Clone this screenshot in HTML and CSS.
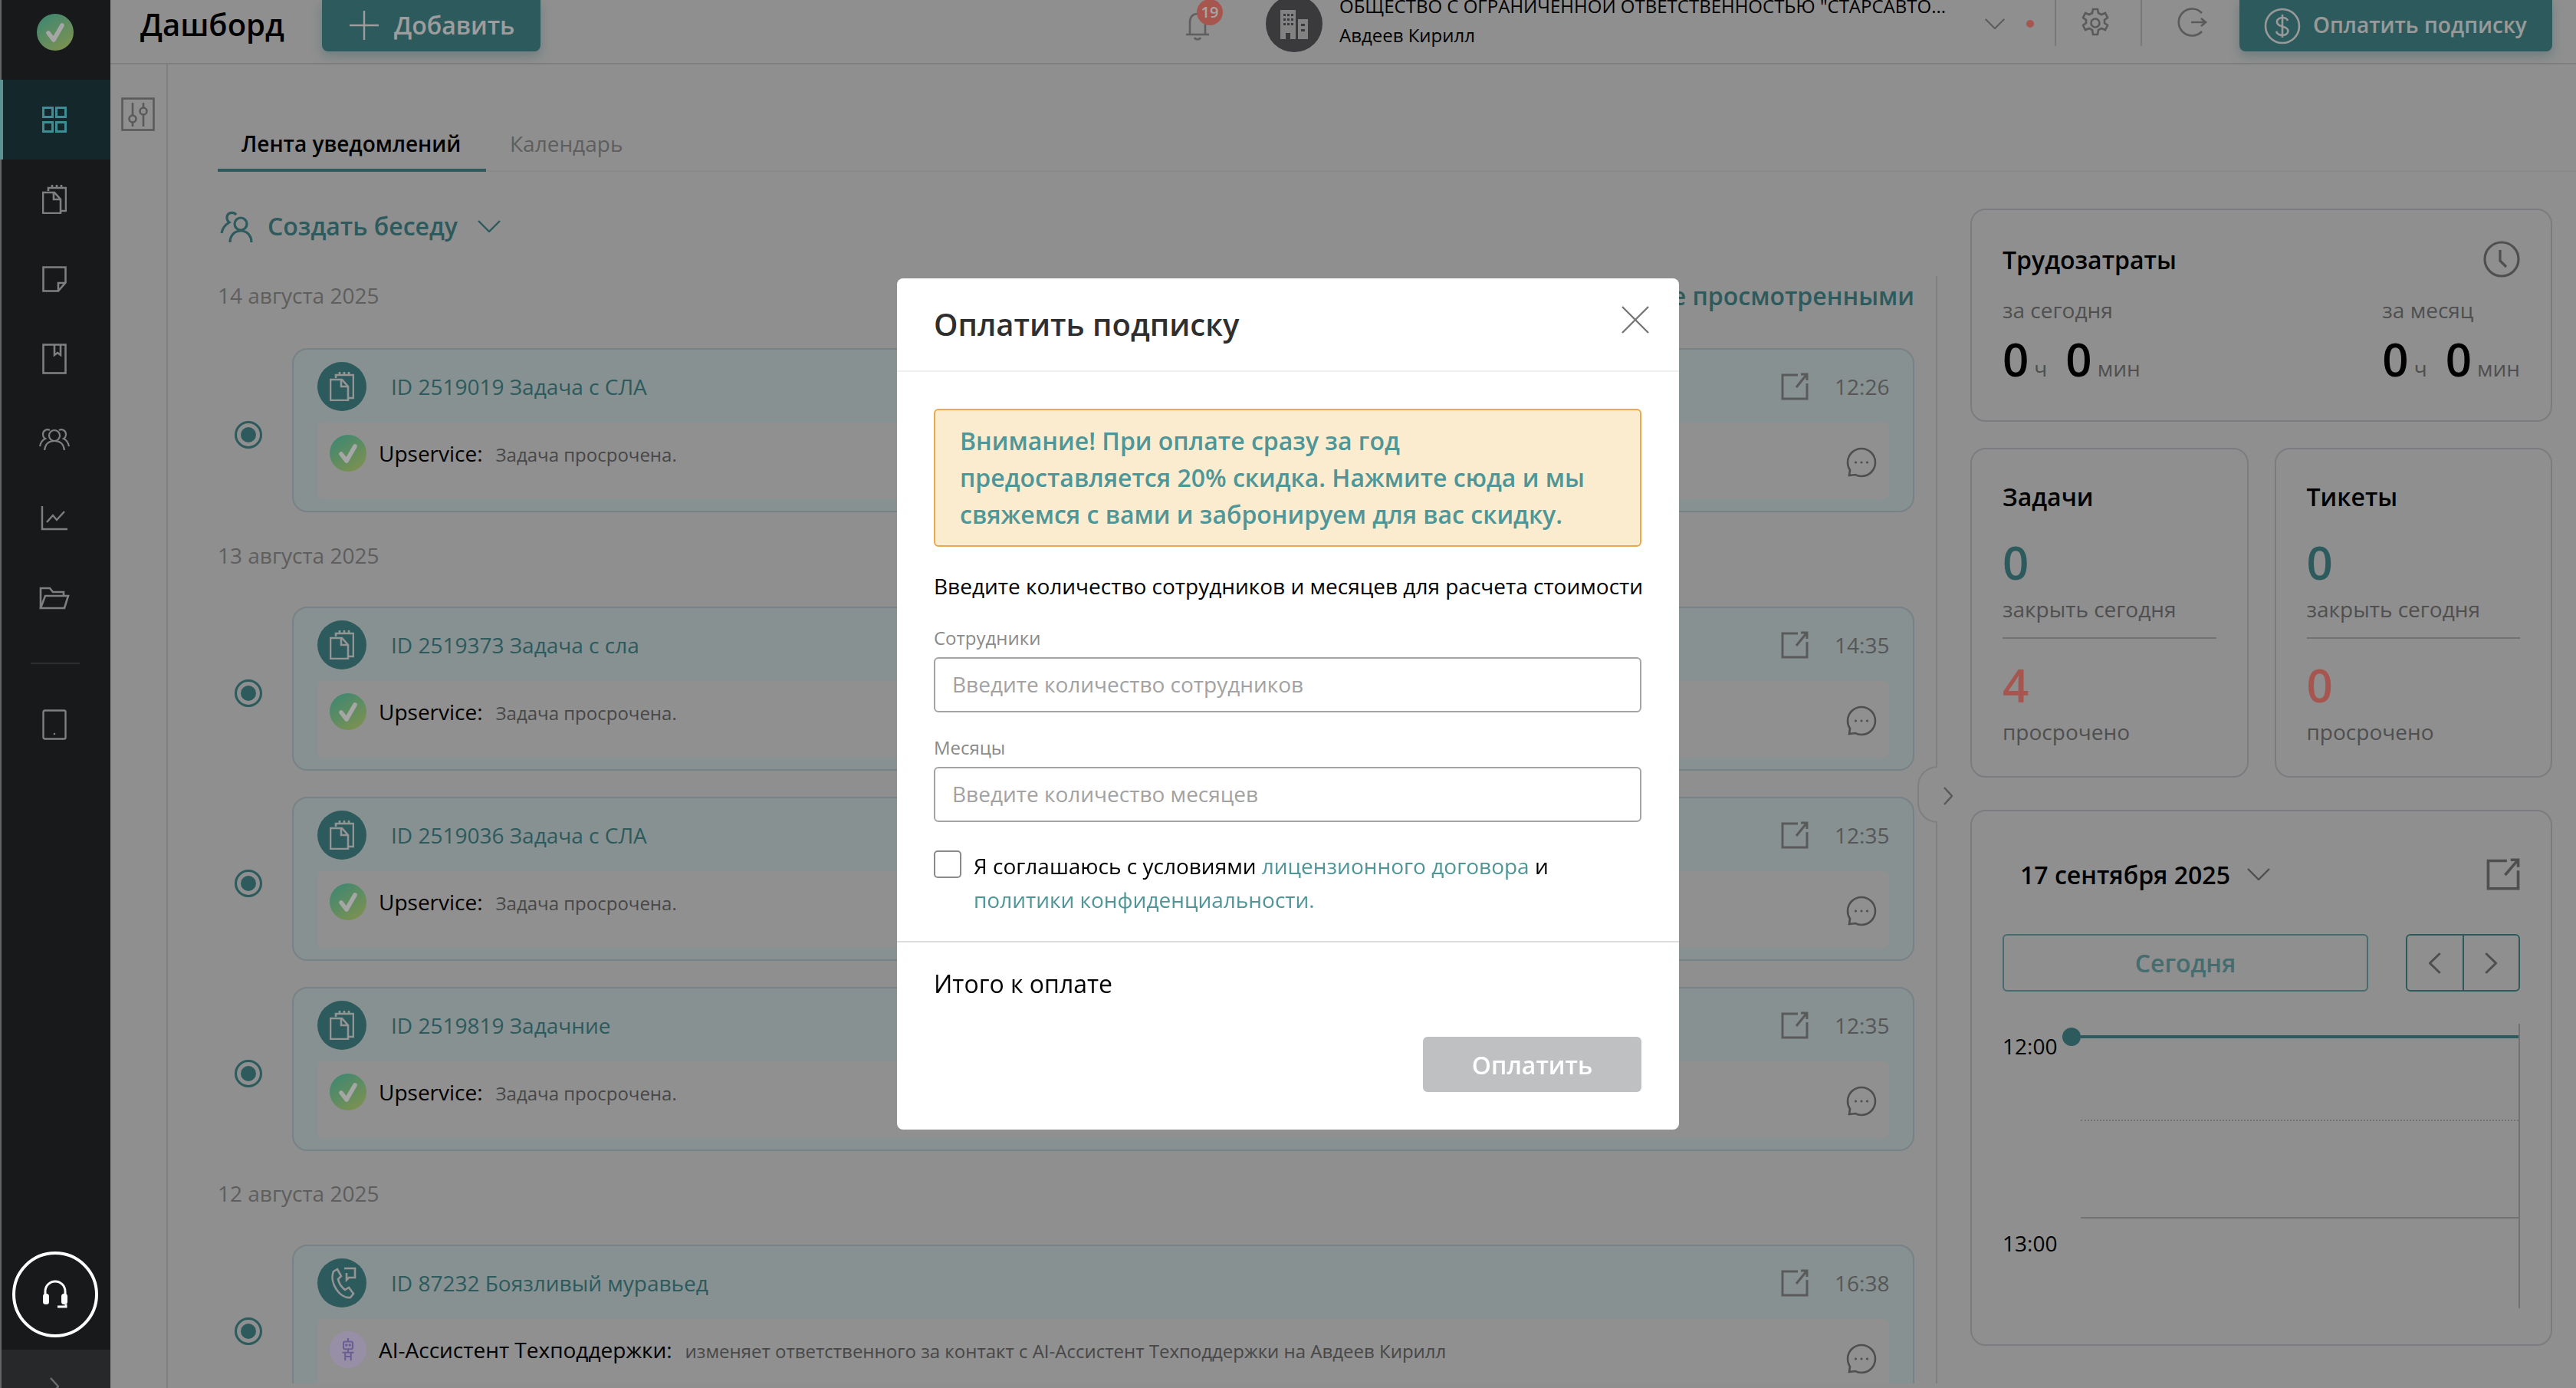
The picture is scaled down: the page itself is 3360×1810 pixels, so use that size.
FILE: index.html
```html
<!DOCTYPE html>
<html lang="ru">
<head>
  <meta charset="UTF-8">
  <title>Дашборд</title>
  <link rel="stylesheet" href="styles.css">
</head>
<body>
  <svg class="sprite" width="0" height="0">
    <defs>
      <linearGradient id="greenGrad" x1="0.15" y1="0" x2="0.85" y2="1">
        <stop offset="0" stop-color="#5fd0b0"/>
        <stop offset="1" stop-color="#c4e07a"/>
      </linearGradient>
      <symbol id="i-check" viewBox="0 0 48 48">
        <circle cx="24" cy="24" r="24" fill="url(#greenGrad)"/>
        <path d="M15 25l7 9 11-19" fill="none" stroke="#fff" stroke-width="5.5" stroke-linecap="round" stroke-linejoin="round"/>
      </symbol>
      <symbol id="i-doc" viewBox="0 0 32 38" fill="none" stroke="currentColor" stroke-width="2.6">
        <path d="M8 8V4h23v30h-6"/>
        <path d="M13 4V0M19 4V0M25 4V0"/>
        <path d="M1 10h15l8 9v18H1z"/>
        <path d="M15 10v9h9"/>
      </symbol>
      <symbol id="i-ext" viewBox="0 0 36 36" fill="none" stroke="currentColor" stroke-width="3">
        <path d="M22 3H2v31h32V14"/>
        <path d="M20 19L33 3M26 2h8v8"/>
      </symbol>
      <symbol id="i-chat" viewBox="0 0 40 40" fill="none" stroke="currentColor" stroke-width="2.6">
        <path d="M20 2C10 2 2 10 2 20c0 4 1 7 3 10l-1 7 8-1c3 2 5 2 8 2 10 0 18-8 18-18S30 2 20 2z"/>
        <circle cx="12.500" cy="20" r="1.600" fill="currentColor" stroke="none"/>
        <circle cx="20" cy="20" r="1.600" fill="currentColor" stroke="none"/>
        <circle cx="27.500" cy="20" r="1.600" fill="currentColor" stroke="none"/>
      </symbol>
      <symbol id="i-chevron" viewBox="0 0 30 16" fill="none" stroke="currentColor" stroke-width="2.4">
        <path d="M1 1l14 14L29 1"/>
      </symbol>
      <symbol id="i-right" viewBox="0 0 12 24" fill="none" stroke="currentColor" stroke-width="2.4">
        <path d="M1 1l10 11L1 23"/>
      </symbol>
      <symbol id="i-left" viewBox="0 0 12 24" fill="none" stroke="currentColor" stroke-width="2.4">
        <path d="M11 1L1 12l10 11"/>
      </symbol>
    </defs>
  </svg>

  <div class="app">
    <aside class="sidebar">
      <div class="logo"><svg class="logo-icon"><use href="#i-check"/></svg></div>
      <a class="nav-item active">
        <svg width="32" height="34" viewBox="0 0 32 34" fill="none" stroke="currentColor" stroke-width="3">
          <rect x="1.500" y="1.500" width="12" height="12"/><rect x="18.500" y="1.500" width="12" height="12"/>
          <rect x="1.500" y="20.500" width="12" height="12"/><rect x="18.500" y="20.500" width="12" height="12"/>
        </svg>
      </a>
      <a class="nav-item"><svg width="32" height="38"><use href="#i-doc"/></svg></a>
      <a class="nav-item">
        <svg width="32" height="34" viewBox="0 0 32 34" fill="none" stroke="currentColor" stroke-width="2.6">
          <path d="M1.500 1.500h29v20L21 32.500H1.500z"/><path d="M30 22h-9v10"/>
        </svg>
      </a>
      <a class="nav-item">
        <svg width="32" height="40" viewBox="0 0 32 40" fill="none" stroke="currentColor" stroke-width="2.6">
          <rect x="1.500" y="1.500" width="29" height="37"/><path d="M16 2v13l4-3 4 3V2"/>
        </svg>
      </a>
      <a class="nav-item">
        <svg width="40" height="32" viewBox="0 0 40 32" fill="none" stroke="currentColor" stroke-width="2.2">
          <circle cx="20" cy="12" r="7"/><path d="M7 31c1-8 6-12 13-12s12 4 13 12"/>
          <path d="M14 5a6 6 0 0 0-9 5c0 3 1 5 3 6-4 2-6 5-7 10"/><path d="M26 5a6 6 0 0 1 9 5c0 3-1 5-3 6 4 2 6 5 7 10"/>
        </svg>
      </a>
      <a class="nav-item">
        <svg width="36" height="32" viewBox="0 0 36 32" fill="none" stroke="currentColor" stroke-width="2.4">
          <path d="M2 0v30h33"/><path d="M8 21l8-9 5 6 10-11"/>
        </svg>
      </a>
      <a class="nav-item">
        <svg width="40" height="30" viewBox="0 0 40 30" fill="none" stroke="currentColor" stroke-width="2.6">
          <path d="M2 28V2h12l4 5h14v5"/><path d="M2 28l6-16h30l-5 16z"/>
        </svg>
      </a>
      <div class="nav-divider"></div>
      <a class="nav-item">
        <svg width="32" height="40" viewBox="0 0 32 40" fill="none" stroke="currentColor" stroke-width="2.4">
          <rect x="1.500" y="1.500" width="29" height="37" rx="2"/><circle cx="16" cy="32" r="1.300" fill="currentColor" stroke="none"/>
        </svg>
      </a>
      <div class="sidebar-foot">
        <svg width="12" height="24"><use href="#i-right"/></svg>
      </div>
    </aside>

    <div class="main">
      <header class="topbar">
        <h1 class="page-title">Дашборд</h1>
        <button class="btn-top btn-add">
          <svg width="38" height="38" viewBox="0 0 38 38" stroke="currentColor" stroke-width="2.4"><path d="M19 0v38M0 19h38"/></svg>
          Добавить
        </button>
        <div class="topbar-right">
          <div class="bell">
            <svg width="32" height="42" viewBox="0 0 32 42" fill="none" stroke="currentColor" stroke-width="2.6">
              <path d="M6 33V17C6 10 10 6 16 6s10 4 10 11v16"/><path d="M1 33h30"/><path d="M12 37c1 3 7 3 8 0"/>
            </svg>
            <span class="badge">19</span>
          </div>
          <div class="company-logo">
            <svg width="38" height="40" viewBox="0 0 38 40" fill="currentColor">
              <path d="M1 2h20v38h-7v-8H8v8H1z"/><path d="M24 14h13v26H24z"/>
              <g fill="#5a5a5e">
                <rect x="5" y="7" width="3" height="3"/><rect x="10" y="7" width="3" height="3"/><rect x="15" y="7" width="3" height="3"/>
                <rect x="5" y="13" width="3" height="3"/><rect x="10" y="13" width="3" height="3"/><rect x="15" y="13" width="3" height="3"/>
                <rect x="5" y="19" width="3" height="3"/><rect x="10" y="19" width="3" height="3"/><rect x="15" y="19" width="3" height="3"/>
                <rect x="28" y="20" width="5" height="3"/><rect x="28" y="27" width="5" height="3"/>
              </g>
            </svg>
          </div>
          <div class="company">
            <div class="company-name">ОБЩЕСТВО С ОГРАНИЧЕННОЙ ОТВЕТСТВЕННОСТЬЮ "СТАРСАВТО...</div>
            <div class="company-user">Авдеев Кирилл</div>
          </div>
          <svg class="company-arrow" width="28" height="14"><use href="#i-chevron"/></svg>
          <span class="status-dot"></span>
          <div class="top-sep"></div>
          <svg class="top-icon" width="38" height="40" viewBox="0 0 38 40" fill="none" stroke="currentColor" stroke-width="2.600">
            <path d="M16 2h6l1 5 4 2 5-2 3 6-4 3v4l4 3-3 6-5-2-4 2-1 6h-6l-1-6-4-2-5 2-3-6 4-3v-4l-4-3 3-6 5 2 4-2z"/>
            <circle cx="19" cy="20" r="5.500"/>
          </svg>
          <div class="top-sep"></div>
          <svg class="top-icon logout" width="40" height="38" viewBox="0 0 40 38" fill="none" stroke="currentColor" stroke-width="2.600">
            <path d="M32 7A17.500 17.500 0 1 0 32 31"/><path d="M18 19h18M31 14l6 5-6 5"/>
          </svg>
          <button class="btn-top btn-pay">
            <svg width="48" height="48" viewBox="0 0 48 48" fill="none" stroke="currentColor" stroke-width="2.6">
              <circle cx="24" cy="24" r="22"/><path d="M31 17c-1-3-4-4-7-4s-7 2-7 5.500 3 5 7 6 7.500 2.500 7.500 6-4 5.500-7.500 5.500-7-2-8-5M24 9v30"/>
            </svg>
            Оплатить подписку
          </button>
        </div>
      </header>

      <div class="content">
        <div class="filter-col">
          <span class="filter-btn">
            <svg width="44" height="44" viewBox="0 0 44 44" fill="none" stroke="currentColor" stroke-width="2.600">
              <rect x="1.500" y="1.500" width="41" height="41"/>
              <path d="M15 7v16M15 33v5M29 7v6M29 23v15"/><circle cx="15" cy="28" r="4.500"/><circle cx="29" cy="18" r="4.500"/>
            </svg>
          </span>
        </div>

        <section class="feed-col">
          <div class="tabs">
            <span class="tab active">Лента уведомлений</span>
            <span class="tab">Календарь</span>
          </div>
          <div class="create-chat">
            <svg width="44" height="44" viewBox="0 0 44 44" fill="none" stroke="currentColor" stroke-width="3.200">
              <circle cx="27" cy="19" r="8"/><path d="M13 43c0-9 6-15 14-15s14 6 14 15"/>
              <path d="M21 7a7 7 0 0 0-11 0c-2 3-1 8 2 10-5 3-9 8-10 14"/>
            </svg>
            <span>Создать беседу</span>
            <svg class="create-arrow" width="30" height="16"><use href="#i-chevron"/></svg>
          </div>

          <div class="feed">
            <div class="date-row">
              <span class="date">14 августа 2025</span>
              <a class="mark-read">Сделать все просмотренными</a>
            </div>
            <div class="feed-row">
              <span class="radio"></span>
              <article class="card">
                <div class="card-head">
                  <span class="card-icon"><svg width="32" height="38"><use href="#i-doc"/></svg></span>
                  <span class="card-title">ID 2519019 Задача с СЛА</span>
                  <svg class="card-ext" width="36" height="36"><use href="#i-ext"/></svg>
                  <span class="card-time">12:26</span>
                </div>
                <div class="card-body">
                  <svg class="avatar"><use href="#i-check"/></svg>
                  <span class="author">Upservice:</span>
                  <span class="message">Задача просрочена.</span>
                  <svg class="card-chat" width="40" height="40"><use href="#i-chat"/></svg>
                </div>
              </article>
            </div>

            <div class="date-row later"><span class="date">13 августа 2025</span></div>
            <div class="feed-row">
              <span class="radio"></span>
              <article class="card">
                <div class="card-head">
                  <span class="card-icon"><svg width="32" height="38"><use href="#i-doc"/></svg></span>
                  <span class="card-title">ID 2519373 Задача с сла</span>
                  <svg class="card-ext" width="36" height="36"><use href="#i-ext"/></svg>
                  <span class="card-time">14:35</span>
                </div>
                <div class="card-body">
                  <svg class="avatar"><use href="#i-check"/></svg>
                  <span class="author">Upservice:</span>
                  <span class="message">Задача просрочена.</span>
                  <svg class="card-chat" width="40" height="40"><use href="#i-chat"/></svg>
                </div>
              </article>
            </div>
            <div class="feed-row next">
              <span class="radio"></span>
              <article class="card">
                <div class="card-head">
                  <span class="card-icon"><svg width="32" height="38"><use href="#i-doc"/></svg></span>
                  <span class="card-title">ID 2519036 Задача с СЛА</span>
                  <svg class="card-ext" width="36" height="36"><use href="#i-ext"/></svg>
                  <span class="card-time">12:35</span>
                </div>
                <div class="card-body">
                  <svg class="avatar"><use href="#i-check"/></svg>
                  <span class="author">Upservice:</span>
                  <span class="message">Задача просрочена.</span>
                  <svg class="card-chat" width="40" height="40"><use href="#i-chat"/></svg>
                </div>
              </article>
            </div>
            <div class="feed-row next">
              <span class="radio"></span>
              <article class="card">
                <div class="card-head">
                  <span class="card-icon"><svg width="32" height="38"><use href="#i-doc"/></svg></span>
                  <span class="card-title">ID 2519819 Задачние</span>
                  <svg class="card-ext" width="36" height="36"><use href="#i-ext"/></svg>
                  <span class="card-time">12:35</span>
                </div>
                <div class="card-body">
                  <svg class="avatar"><use href="#i-check"/></svg>
                  <span class="author">Upservice:</span>
                  <span class="message">Задача просрочена.</span>
                  <svg class="card-chat" width="40" height="40"><use href="#i-chat"/></svg>
                </div>
              </article>
            </div>

            <div class="date-row later"><span class="date">12 августа 2025</span></div>
            <div class="feed-row">
              <span class="radio"></span>
              <article class="card">
                <div class="card-head">
                  <span class="card-icon">
                    <svg width="38" height="42" viewBox="0 0 38 42" fill="none" stroke="currentColor" stroke-width="2.600">
                      <path d="M8 6l5-3 5 9-4 4c1 6 4 10 9 14l5-3 6 8-4 5C16 42 2 20 8 6z"/><path d="M22 2h14v12h-8l-3 3V8"/>
                    </svg>
                  </span>
                  <span class="card-title">ID 87232 Боязливый муравьед</span>
                  <svg class="card-ext" width="36" height="36"><use href="#i-ext"/></svg>
                  <span class="card-time">16:38</span>
                </div>
                <div class="card-body">
                  <span class="avatar bot">
                    <svg width="20" height="30" viewBox="0 0 26 40" fill="none" stroke="#a48fe6" stroke-width="2.800">
                      <rect x="5" y="6" width="16" height="13" rx="3"/><path d="M13 0v6M13 19v6M3 25h20M8 25v14M18 25v14M8 32h10"/>
                      <circle cx="10" cy="12" r="1" fill="#a48fe6"/><circle cx="16" cy="12" r="1" fill="#a48fe6"/>
                    </svg>
                  </span>
                  <span class="author">AI-Ассистент Техподдержки:</span>
                  <span class="message">изменяет ответственного за контакт с AI-Ассистент Техподдержки на Авдеев Кирилл</span>
                  <svg class="card-chat" width="40" height="40"><use href="#i-chat"/></svg>
                </div>
              </article>
            </div>
          </div>
          <span class="feed-toggle"><svg width="12" height="24"><use href="#i-right"/></svg></span>
        </section>

        <aside class="widgets">
          <div class="widget work">
            <div class="work-head">
              <h3 class="widget-title">Трудозатраты</h3>
              <svg width="48" height="48" viewBox="0 0 48 48" fill="none" stroke="currentColor" stroke-width="3.200">
                <circle cx="24" cy="24" r="22"/><path d="M22 12v14l8 8"/>
              </svg>
            </div>
            <div class="work-cols">
              <div>
                <div class="work-label">за сегодня</div>
                <div class="work-value"><b>0</b><small>ч</small><b>0</b><small>мин</small></div>
              </div>
              <div>
                <div class="work-label">за месяц</div>
                <div class="work-value"><b>0</b><small>ч</small><b>0</b><small>мин</small></div>
              </div>
            </div>
          </div>

          <div class="stat-row">
            <div class="widget stat">
              <h3 class="widget-title">Задачи</h3>
              <div class="stat-num teal">0</div>
              <div class="stat-label ruled">закрыть сегодня</div>
              <div class="stat-num red">4</div>
              <div class="stat-label">просрочено</div>
            </div>
            <div class="widget stat">
              <h3 class="widget-title">Тикеты</h3>
              <div class="stat-num teal">0</div>
              <div class="stat-label ruled">закрыть сегодня</div>
              <div class="stat-num red">0</div>
              <div class="stat-label">просрочено</div>
            </div>
          </div>

          <div class="widget calendar">
            <div class="cal-head">
              <span class="cal-date">17 сентября 2025</span>
              <svg class="cal-arrow" width="30" height="16"><use href="#i-chevron"/></svg>
              <svg class="cal-ext" width="44" height="42" viewBox="0 0 36 36" preserveAspectRatio="none"><use href="#i-ext"/></svg>
            </div>
            <div class="cal-controls">
              <button class="cal-today">Сегодня</button>
              <div class="cal-nav">
                <span><svg width="16" height="28" viewBox="0 0 12 24" preserveAspectRatio="none"><use href="#i-left"/></svg></span>
                <span><svg width="16" height="28" viewBox="0 0 12 24" preserveAspectRatio="none"><use href="#i-right"/></svg></span>
              </div>
            </div>
            <div class="timeline">
              <div class="hours">
                <span>12:00</span>
                <span>13:00</span>
              </div>
              <div class="grid">
                <div class="slot half"></div>
                <div class="slot full"></div>
                <div class="now"></div>
              </div>
            </div>
          </div>
        </aside>
      </div>
    </div>
  </div>

  <div class="overlay">
    <div class="modal">
      <div class="modal-head">
        <h2 class="modal-title">Оплатить подписку</h2>
        <svg class="modal-close" width="36" height="36" viewBox="0 0 36 36" stroke="currentColor" stroke-width="2.400"><path d="M1 1l34 34M35 1L1 35"/></svg>
      </div>
      <div class="modal-body">
        <div class="notice">Внимание! При оплате сразу за год предоставляется 20% скидка. Нажмите сюда и мы свяжемся с вами и забронируем для вас скидку.</div>
        <p class="hint">Введите количество сотрудников и месяцев для расчета стоимости</p>
        <label class="field-label">Сотрудники</label>
        <input class="field" type="text" placeholder="Введите количество сотрудников">
        <label class="field-label">Месяцы</label>
        <input class="field" type="text" placeholder="Введите количество месяцев">
        <div class="agree">
          <span class="checkbox"></span>
          <span class="agree-text">Я соглашаюсь с условиями <a>лицензионного договора</a> и<br><a>политики конфиденциальности.</a></span>
        </div>
      </div>
      <div class="modal-foot">
        <div class="total">Итого к оплате</div>
        <button class="btn-submit">Оплатить</button>
      </div>
    </div>
  </div>

  <div class="support">
    <svg width="36" height="38" viewBox="0 0 36 38" fill="none">
      <path d="M5 22V15a13 13 0 0 1 26 0v7" stroke="#fff" stroke-width="3"/>
      <rect x="2" y="18" width="8" height="14" rx="3.500" fill="#fff"/><rect x="26" y="18" width="8" height="14" rx="3.500" fill="#fff"/>
      <path d="M32 32v3h-11" stroke="#fff" stroke-width="3"/>
    </svg>
  </div>
</body>
</html>
```

FILE: styles.css
```css
* {
  box-sizing: border-box;
}
html, body {
  margin: 0;
  padding: 0;
  height: 100%;
  overflow: hidden;
  background: #dcdcdc;
  font-family: "Open Sans", "Noto Sans", sans-serif;
  color: #000;
}
h1, h2, h3, p {
  margin: 0;
}
button {
  font-family: inherit;
  border: none;
}
.sprite {
  position: absolute;
}
.app {
  display: flex;
  height: 1810px;
}

/* sidebar */
.sidebar {
  width: 144px;
  flex: none;
  display: flex;
  flex-direction: column;
  background: #25272a;
  border-left: 2px solid #9a9a9a;
  color: #c3c3c3;
}
.logo {
  height: 104px;
  padding: 18px 0 0 46px;
}
.logo-icon {
  display: block;
  width: 48px;
  height: 48px;
}
.nav-item {
  height: 104px;
  flex: none;
  display: flex;
  align-items: center;
  justify-content: center;
  padding-right: 4px;
}
.nav-item.active {
  background: #203e42;
  color: #61d9e4;
  border-left: 4px solid #8fdfe0;
  margin-left: -2px;
  padding-right: 6px;
}
.nav-divider {
  height: 2px;
  flex: none;
  background: #45474a;
  margin: 32px 40px 27px 38px;
}
.sidebar-foot {
  margin-top: auto;
  height: 50px;
  background: #3c3e41;
  display: flex;
  justify-content: center;
  padding: 36px 4px 0 0;
  color: #a8a8a8;
}

/* topbar */
.main {
  flex: 1;
  min-width: 0;
  display: flex;
  flex-direction: column;
}
.topbar {
  height: 84px;
  flex: none;
  display: flex;
  align-items: flex-start;
  border-bottom: 2px solid #c3c3c3;
  padding-left: 39px;
}
.page-title {
  font-size: 40px;
  line-height: 64px;
  font-weight: 600;
  width: 237px;
}
.btn-top {
  height: 67px;
  flex: none;
  background: #458b8e;
  color: #fff;
  font-size: 28px;
  font-weight: 600;
  display: flex;
  align-items: center;
  border-radius: 0 0 8px 8px;
  box-shadow: 0 6px 14px rgba(69, 139, 142, .35);
}
.btn-add {
  width: 285px;
  padding: 0 0 2px 36px;
  gap: 20px;
  font-size: 32px;
  color: #f2f2f2;
}
.topbar-right {
  flex: 1;
  display: flex;
  align-items: flex-start;
  padding: 0 31px 0 841px;
  color: #9a9a9a;
}
.bell {
  position: relative;
  width: 32px;
  height: 50px;
  flex: none;
  margin-top: 12px;
  color: #929292;
}
.badge {
  position: absolute;
  top: -13px;
  left: 15px;
  width: 34px;
  height: 34px;
  line-height: 34px;
  border-radius: 50%;
  background: #ff837a;
  color: #fff;
  font-size: 20px;
  font-weight: 600;
  text-align: center;
}
.company-logo {
  width: 74px;
  height: 74px;
  flex: none;
  border-radius: 50%;
  background: #5a5a5e;
  margin: -6px 0 0 73px;
  display: flex;
  align-items: center;
  justify-content: center;
  color: #c8c8c8;
}
.company {
  width: 841px;
  flex: none;
  margin-left: 22px;
  color: #000;
  font-size: 24px;
}
.company-name {
  line-height: 24px;
  margin-top: -4px;
  white-space: nowrap;
}
.company-user {
  line-height: 34px;
  margin-top: 9px;
}
.company-arrow {
  color: #8a8a8a;
  margin-top: 24px;
  flex: none;
}
.status-dot {
  width: 10px;
  height: 10px;
  flex: none;
  border-radius: 50%;
  background: #ff837a;
  margin: 26px 0 0 27px;
}
.top-sep {
  width: 2px;
  height: 60px;
  flex: none;
  background: #b8b8b8;
}
.status-dot + .top-sep {
  margin-left: 27px;
}
.top-icon {
  color: #8a8a8a;
  flex: none;
  margin: 10px 40px 0 32px;
}
.top-icon.logout {
  margin: 10px 0 0 46px;
}
.btn-pay {
  width: 408px;
  margin-left: auto;
  padding: 0 0 3px 32px;
  gap: 16px;
  color: #ececec;
}
.btn-pay svg {
  margin-top: 3px;
}

/* content */
.content {
  flex: 1;
  min-height: 0;
  display: flex;
}
.filter-col {
  width: 75px;
  flex: none;
  border-right: 2px solid #c3c3c3;
  padding: 43px 0 0 14px;
  color: #8a8a8a;
}
.filter-btn {
  display: block;
  height: 44px;
}
.feed-col {
  position: relative;
  width: 2308px;
  flex: none;
  padding-left: 65px;
  display: flex;
  flex-direction: column;
  min-height: 0;
}
.tabs {
  display: flex;
  flex: none;
  width: 3076px;
  height: 140px;
  padding-top: 78px;
  background: linear-gradient(#d3d3d3, #d3d3d3) no-repeat left bottom / 100% 2px;
}
.tab {
  font-size: 28px;
  color: #919191;
  line-height: 50px;
  padding: 0 31px;
  height: 62px;
}
.tab.active {
  color: #000;
  font-weight: 600;
  width: 350px;
  border-bottom: 4px solid #458b8e;
}
.create-chat {
  display: flex;
  align-items: center;
  flex: none;
  height: 136px;
  padding: 5px 0 0 3px;
  color: #458b8e;
  font-size: 32px;
  font-weight: 600;
}
.create-chat span {
  margin-left: 18px;
}
.create-arrow {
  margin-left: 26px;
}
.feed {
  flex: 1;
  min-height: 0;
  overflow: hidden;
  border-right: 2px solid #c3c3c3;
  margin-bottom: 6px;
  padding-right: 28px;
}
.date-row {
  display: flex;
  justify-content: space-between;
  align-items: center;
  height: 94px;
  padding-bottom: 44px;
}
.date-row.later {
  height: 122px;
  padding: 0 0 12px;
}
.date {
  font-size: 28px;
  color: #919191;
}
.mark-read {
  font-size: 32px;
  font-weight: 600;
  color: #458b8e;
}
.feed-row {
  display: flex;
  align-items: center;
}
.feed-row:nth-child(2) {
  margin-bottom: 1px;
}
.feed-row.next {
  margin-top: 34px;
}
.radio {
  width: 36px;
  height: 36px;
  flex: none;
  margin: 12px 39px 0 22px;
  border: 3px solid #458b8e;
  border-radius: 50%;
  padding: 5px;
  background: #458b8e content-box;
}
.card {
  flex: 1;
  min-width: 0;
  height: 214px;
  border: 2px solid #b8c6cc;
  border-radius: 20px;
  background: #cfdfdf;
  padding: 15px 31px 0;
}
.card-head {
  display: flex;
  align-items: center;
  height: 66px;
  margin-bottom: 14px;
}
.card-icon {
  width: 64px;
  height: 64px;
  flex: none;
  border-radius: 50%;
  background: #458b8e;
  color: #e4e4e4;
  display: flex;
  align-items: center;
  justify-content: center;
}
.card-title {
  flex: 1;
  font-size: 28px;
  color: #458b8e;
  margin-left: 32px;
}
.card-time {
  width: 71px;
  margin-left: 34px;
  font-size: 28px;
  color: #858585;
  white-space: nowrap;
}
.card-ext {
  color: #8a8a8a;
}
.card-body {
  display: flex;
  align-items: flex-start;
  height: 100px;
  background: #dddddd;
  border-radius: 8px;
  padding: 16px 16px 0;
}
.avatar {
  width: 48px;
  height: 48px;
  flex: none;
}
.avatar.bot {
  border-radius: 50%;
  background: #e9dcff;
  display: flex;
  align-items: center;
  justify-content: center;
}
.author {
  font-size: 28px;
  line-height: 48px;
  margin-left: 16px;
  white-space: nowrap;
}
.message {
  flex: 1;
  font-size: 24px;
  line-height: 52px;
  margin-left: 17px;
  color: #6e6e6e;
  white-space: nowrap;
}
.card-chat {
  color: #7a7a7a;
  flex: none;
  margin-top: 16px;
}
.feed-toggle {
  position: absolute;
  top: 915px;
  right: 0;
  width: 26px;
  height: 74px;
  border: 2px solid #c3c3c3;
  border-right: none;
  border-radius: 26px 0 0 26px;
  background: #dcdcdc;
  color: #8a8a8a;
}
.feed-toggle svg {
  position: absolute;
  left: 32px;
  top: 25px;
  overflow: visible;
}

/* widgets */
.widgets {
  flex: 1;
  padding: 188px 31px 0 43px;
  display: flex;
  flex-direction: column;
}
.widget {
  border: 2px solid #bfbfc5;
  border-radius: 20px;
}
.widget-title {
  font-size: 32px;
  font-weight: 600;
}
.work {
  height: 278px;
  padding: 38px 40px 0;
}
.work-head {
  display: flex;
  justify-content: space-between;
  align-items: center;
  height: 52px;
  color: #7a7a7a;
}
.work-head .widget-title {
  color: #000;
}
.work-cols {
  display: flex;
  justify-content: space-between;
  margin-top: 22px;
}
.work-label {
  font-size: 28px;
  color: #7a7a7a;
  line-height: 36px;
}
.work-value {
  display: flex;
  align-items: baseline;
  margin-top: 11px;
  line-height: 70px;
}
.work-value b {
  font-size: 60px;
  font-weight: 600;
}
.work-value small {
  font-size: 28px;
  color: #7a7a7a;
  margin: 0 24px 0 7px;
}
.work-value small:last-child {
  margin-right: 0;
}
.stat-row {
  display: flex;
  gap: 34px;
  margin-top: 34px;
}
.stat {
  flex: 1;
  height: 430px;
  padding: 40px 40px 0;
}
.stat-num {
  font-size: 60px;
  font-weight: 600;
  line-height: 80px;
  margin-top: 24px;
}
.stat-num.teal {
  color: #458b8e;
}
.stat-num.red {
  color: #ff837a;
  margin-top: 20px;
}
.stat-label {
  font-size: 28px;
  color: #7a7a7a;
  line-height: 38px;
  margin-top: 2px;
}
.stat-label.ruled {
  padding-bottom: 18px;
  border-bottom: 2px solid #b0b0b0;
}
.calendar {
  height: 699px;
  margin-top: 42px;
  padding: 60px 40px 0;
}
.cal-head {
  display: flex;
  align-items: center;
  height: 44px;
  padding-left: 23px;
  color: #7a7a7a;
}
.cal-date {
  font-size: 32px;
  font-weight: 600;
  color: #000;
}
.cal-arrow {
  margin-left: 22px;
}
.cal-ext {
  margin-left: auto;
}
.cal-controls {
  display: flex;
  justify-content: space-between;
  margin-top: 56px;
}
.cal-today {
  width: 477px;
  height: 75px;
  background: none;
  border: 2px solid #6aa6a9;
  border-radius: 6px;
  color: #6aa6a9;
  font-size: 32px;
  font-weight: 600;
}
.cal-nav {
  width: 149px;
  height: 75px;
  display: flex;
  border: 2px solid #458b8e;
  border-radius: 6px;
  color: #7a7a7a;
}
.cal-nav span {
  flex: 1;
  display: flex;
  align-items: center;
  justify-content: center;
}
.cal-nav span + span {
  border-left: 2px solid #458b8e;
}
.timeline {
  display: flex;
  margin-top: 42px;
}
.hours {
  width: 102px;
  flex: none;
  font-size: 28px;
  padding-top: 10px;
}
.hours span {
  display: block;
  height: 257px;
  line-height: 38px;
}
.grid {
  position: relative;
  flex: 1;
  height: 371px;
  border-right: 2px solid #b0b0b0;
}
.slot {
  height: 127px;
}
.slot.half {
  border-bottom: 2px dotted #b0b0b0;
}
.slot.full {
  border-bottom: 2px solid #b0b0b0;
}
.now {
  position: absolute;
  top: 15px;
  left: 0;
  right: 0;
  height: 4px;
  background: #458b8e;
}
.now::before {
  content: "";
  position: absolute;
  left: -24px;
  top: -10px;
  width: 24px;
  height: 24px;
  border-radius: 50%;
  background: #458b8e;
}

/* modal */
.overlay {
  position: fixed;
  inset: 0;
  z-index: 10;
  background: rgba(0, 0, 0, .35);
  display: flex;
  align-items: flex-start;
  justify-content: center;
  padding-top: 363px;
}
.modal {
  width: 1020px;
  height: 1110px;
  background: #fff;
  border-radius: 8px;
  display: flex;
  flex-direction: column;
}
.modal-head {
  height: 122px;
  flex: none;
  display: flex;
  justify-content: space-between;
  padding: 28px 39px 0 48px;
  border-bottom: 2px solid #f0f0f0;
}
.modal-title {
  font-size: 40px;
  font-weight: 600;
  color: #2f2f2f;
  line-height: 64px;
}
.modal-close {
  color: #777;
  margin-top: 8px;
}
.modal-body {
  height: 744px;
  flex: none;
  padding: 48px 49px 0 48px;
  border-bottom: 2px solid #dcdcdc;
}
.notice {
  height: 180px;
  padding: 16px 32px 0;
  background: #fbecd0;
  border: 2px solid #e8a94f;
  border-radius: 6px;
  color: #4e9697;
  font-size: 32px;
  font-weight: 600;
  line-height: 48px;
}
.hint {
  font-size: 28px;
  line-height: 40px;
  margin-top: 31px;
  white-space: nowrap;
}
.field-label {
  display: block;
  font-size: 24px;
  color: #8a8a8a;
  line-height: 34px;
  margin: 31px 0 8px;
}
.field {
  display: block;
  width: 100%;
  height: 72px;
  padding: 0 22px 2px;
  border: 2px solid #a4a4a4;
  border-radius: 6px;
  font-family: inherit;
  font-size: 28px;
  outline: none;
}
.field::placeholder {
  color: #a2a2a2;
  opacity: 1;
}
.field + .field-label {
  margin-top: 29px;
}
.agree {
  display: flex;
  gap: 16px;
  margin-top: 37px;
  font-size: 28px;
  line-height: 44px;
}
.agree-text {
  margin-top: -2px;
}
.agree a {
  color: #4e9697;
}
.checkbox {
  width: 36px;
  height: 36px;
  flex: none;
  border: 2px solid #8a8a8a;
  border-radius: 5px;
}
.modal-foot {
  flex: 1;
  padding: 30px 49px 0 48px;
  display: flex;
  flex-direction: column;
}
.total {
  font-size: 32px;
  line-height: 48px;
}
.btn-submit {
  align-self: flex-end;
  width: 285px;
  height: 72px;
  margin-top: 45px;
  border-radius: 6px;
  background: #bfc0c2;
  color: #fff;
  font-size: 32px;
  font-weight: 600;
}

/* support button sits above the overlay */
.support {
  position: fixed;
  left: 16px;
  top: 1632px;
  z-index: 20;
  width: 112px;
  height: 112px;
  border: 4px solid #fff;
  border-radius: 50%;
  display: flex;
  align-items: center;
  justify-content: center;
}
```
